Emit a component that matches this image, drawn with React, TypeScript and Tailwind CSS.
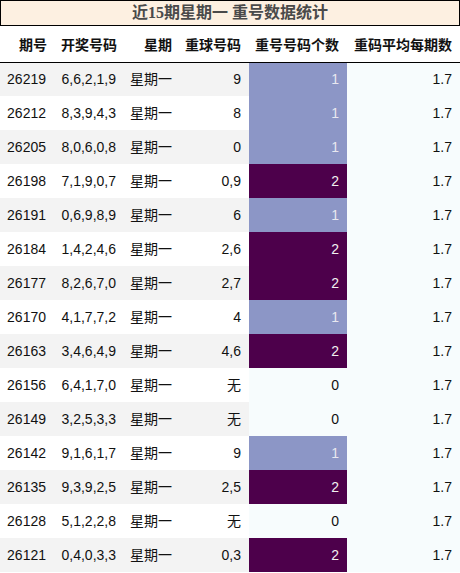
import React from 'react';

const ROWS: [string, string, string, string, number][] = [
  ['26219', '6,6,2,1,9', '星期一', '9', 1],
  ['26212', '8,3,9,4,3', '星期一', '8', 1],
  ['26205', '8,0,6,0,8', '星期一', '0', 1],
  ['26198', '7,1,9,0,7', '星期一', '0,9', 2],
  ['26191', '0,6,9,8,9', '星期一', '6', 1],
  ['26184', '1,4,2,4,6', '星期一', '2,6', 2],
  ['26177', '8,2,6,7,0', '星期一', '2,7', 2],
  ['26170', '4,1,7,7,2', '星期一', '4', 1],
  ['26163', '3,4,6,4,9', '星期一', '4,6', 2],
  ['26156', '6,4,1,7,0', '星期一', '无', 0],
  ['26149', '3,2,5,3,3', '星期一', '无', 0],
  ['26142', '9,1,6,1,7', '星期一', '9', 1],
  ['26135', '9,3,9,2,5', '星期一', '2,5', 2],
  ['26128', '5,1,2,2,8', '星期一', '无', 0],
  ['26121', '0,4,0,3,3', '星期一', '0,3', 2],
];

const countCell: Record<number, string> = {
  0: 'bg-[#f7fcfd] text-[#111]',
  1: 'bg-[#8c96c6] text-[#e8e8f0]',
  2: 'bg-[#4d004b] text-[#f1f1f1]',
};

const font = { fontFamily: '"Liberation Sans", "Noto Sans CJK SC", sans-serif' };

export default function App() {
  return (
    <div className="w-[460px] h-[573px] bg-white overflow-hidden text-[#111]" style={font}>
      <div
        className="h-[26px] border border-black bg-[#fdf0e1] flex items-center justify-center text-[16px] font-bold text-[#4a4a4a]"
        style={{ fontFamily: '"Liberation Serif", "Noto Sans CJK SC", serif' }}
      >
        近15期星期一 重号数据统计
      </div>
      <table className="w-[460px] border-collapse table-fixed text-[14px]">
        <colgroup>
          <col className="w-[55px]" />
          <col className="w-[70px]" />
          <col className="w-[55px]" />
          <col className="w-[69px]" />
          <col className="w-[98px]" />
          <col className="w-[113px]" />
        </colgroup>
        <thead>
          <tr className="h-[36px] border-b border-black">
            {['期号', '开奖号码', '星期', '重球号码', '重号号码个数', '重码平均每期数'].map((h) => (
              <th key={h} className="text-right pr-[8px] pt-[3px] font-bold whitespace-nowrap p-0">
                {h}
              </th>
            ))}
          </tr>
        </thead>
        <tbody>
          {ROWS.map((r, i) => (
            <tr key={r[0]} className={`h-[34px] ${i % 2 === 0 ? 'bg-[#f3f3f3]' : 'bg-white'}`}>
              <td className="text-right pr-[9px] p-0">{r[0]}</td>
              <td className="text-right pr-[9px] p-0">{r[1]}</td>
              <td className="text-right pr-[8px] p-0">{r[2]}</td>
              <td className="text-right pr-[8px] p-0">{r[3]}</td>
              <td className={`text-right pr-[8px] p-0 ${countCell[r[4]]}`}>{r[4]}</td>
              <td className="text-right pr-[8px] p-0 bg-[#f7fcfd]">1.7</td>
            </tr>
          ))}
        </tbody>
      </table>
    </div>
  );
}
